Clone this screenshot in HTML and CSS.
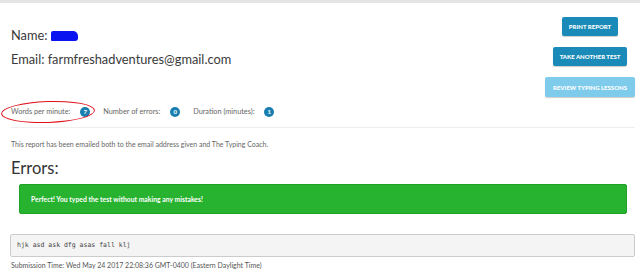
FILE: index.html
```html
<!DOCTYPE html>
<html lang="en">
<head>
    <meta charset="UTF-8">
    <meta name="viewport" content="width=device-width, initial-scale=1.0">
    <title>Typing Test Report</title>
    <link rel="stylesheet" href="styles.css">
</head>
<body>

    <div class="report">
        <div class="report-head">
            <div class="student">
                <p class="student-name">Name: <span class="redacted"></span></p>
                <p class="student-email">Email: farmfreshadventures@gmail.com</p>
            </div>

            <div class="actions">
                <button class="btn">Print Report</button>
                <button class="btn">Take Another Test</button>
                <button class="btn btn-light">Review Typing Lessons</button>
            </div>
        </div>

        <ul class="stats">
            <li class="circled">Words per minute: <span class="badge">7</span></li>
            <li>Number of errors: <span class="badge">0</span></li>
            <li>Duration (minutes): <span class="badge">1</span></li>
        </ul>

        <p class="note">This report has been emailed both to the email address given and The Typing Coach.</p>

        <h2 class="errors-title">Errors:</h2>
        <div class="alert">Perfect! You typed the test without making any mistakes!</div>

        <pre class="typed">hjk asd ask dfg asas fall klj</pre>

        <p class="note submitted">Submission Time: Wed May 24 2017 22:08:36 GMT-0400 (Eastern Daylight Time)</p>
    </div>

</body>
</html>
```

FILE: styles.css
```css
body {
    font-family: Lato, "Open Sans", sans-serif;
    margin: 0;
    padding: 0;
    color: #333;
    background: #fff;
}

.report {
    border-top: 3px solid #e4e4e4;
    padding: 0 5px 0 11px;
}

.report-head {
    display: flex;
    justify-content: space-between;
}

.student {
    padding-top: 20px;
}

.student p {
    margin: 0;
    font-size: 12.8px;
    line-height: 24px;
    color: #3a3a3a;
}

.redacted {
    display: inline-block;
    width: 27px;
    height: 10px;
    background: #0a14f0;
    border-radius: 2px 5px 3px 1px;
    vertical-align: -1px;
}

.actions {
    width: 90px;
    padding-top: 14px;
    display: flex;
    flex-direction: column;
    align-items: center;
    gap: 11px;
}

.btn {
    font-family: Lato, sans-serif;
    font-size: 6px;
    font-weight: 900;
    text-transform: uppercase;
    white-space: nowrap;
    color: #fff;
    background: #1a8bb8;
    border: none;
    border-radius: 2px;
    height: 19px;
    padding: 0 7px;
    box-shadow: 0 1px 1px rgba(0, 0, 0, 0.2);
}

.btn-light {
    background: #7fcbec;
    width: 90px;
    height: 20px;
    padding: 0;
}

.stats {
    list-style: none;
    margin: 10px 0 0;
    padding: 0 0 10px;
    display: flex;
    gap: 13px;
    font-size: 7.3px;
    line-height: 10px;
    color: #666;
    border-bottom: 1px solid #eee;
}

.stats li {
    position: relative;
}

.badge {
    display: inline-block;
    width: 10px;
    height: 10px;
    line-height: 10px;
    margin-left: 8px;
    border-radius: 50%;
    background: #1a7fb0;
    color: #fff;
    font-size: 6px;
    font-weight: bold;
    text-align: center;
    vertical-align: top;
}

.circled::after {
    content: "";
    position: absolute;
    left: -10px;
    top: -6px;
    width: 92px;
    height: 20px;
    border: 1.5px solid #e0101a;
    border-radius: 50%;
    transform: rotate(-2deg);
}

.note {
    margin: 12px 0 0;
    font-size: 7px;
    color: #666;
}

.errors-title {
    margin: 10px 0 0;
    font-size: 16.5px;
    font-weight: normal;
    color: #333;
}

.alert {
    margin: 6px 8px 0;
    background: #27b22f;
    border: 1px solid #20a228;
    border-radius: 2px;
    padding: 0 11px;
    height: 28px;
    line-height: 28px;
    color: #fff;
    font-size: 6.8px;
    font-weight: bold;
}

.typed {
    margin: 20px 0 0 -1px;
    background: #f4f4f4;
    border: 1px solid #ccc;
    border-radius: 2px;
    padding: 0 6px;
    height: 21px;
    line-height: 21px;
    font-family: "DejaVu Sans Mono", monospace;
    font-size: 6.5px;
    color: #444;
}

.submitted {
    margin-top: 4px;
    color: #555;
}
```
